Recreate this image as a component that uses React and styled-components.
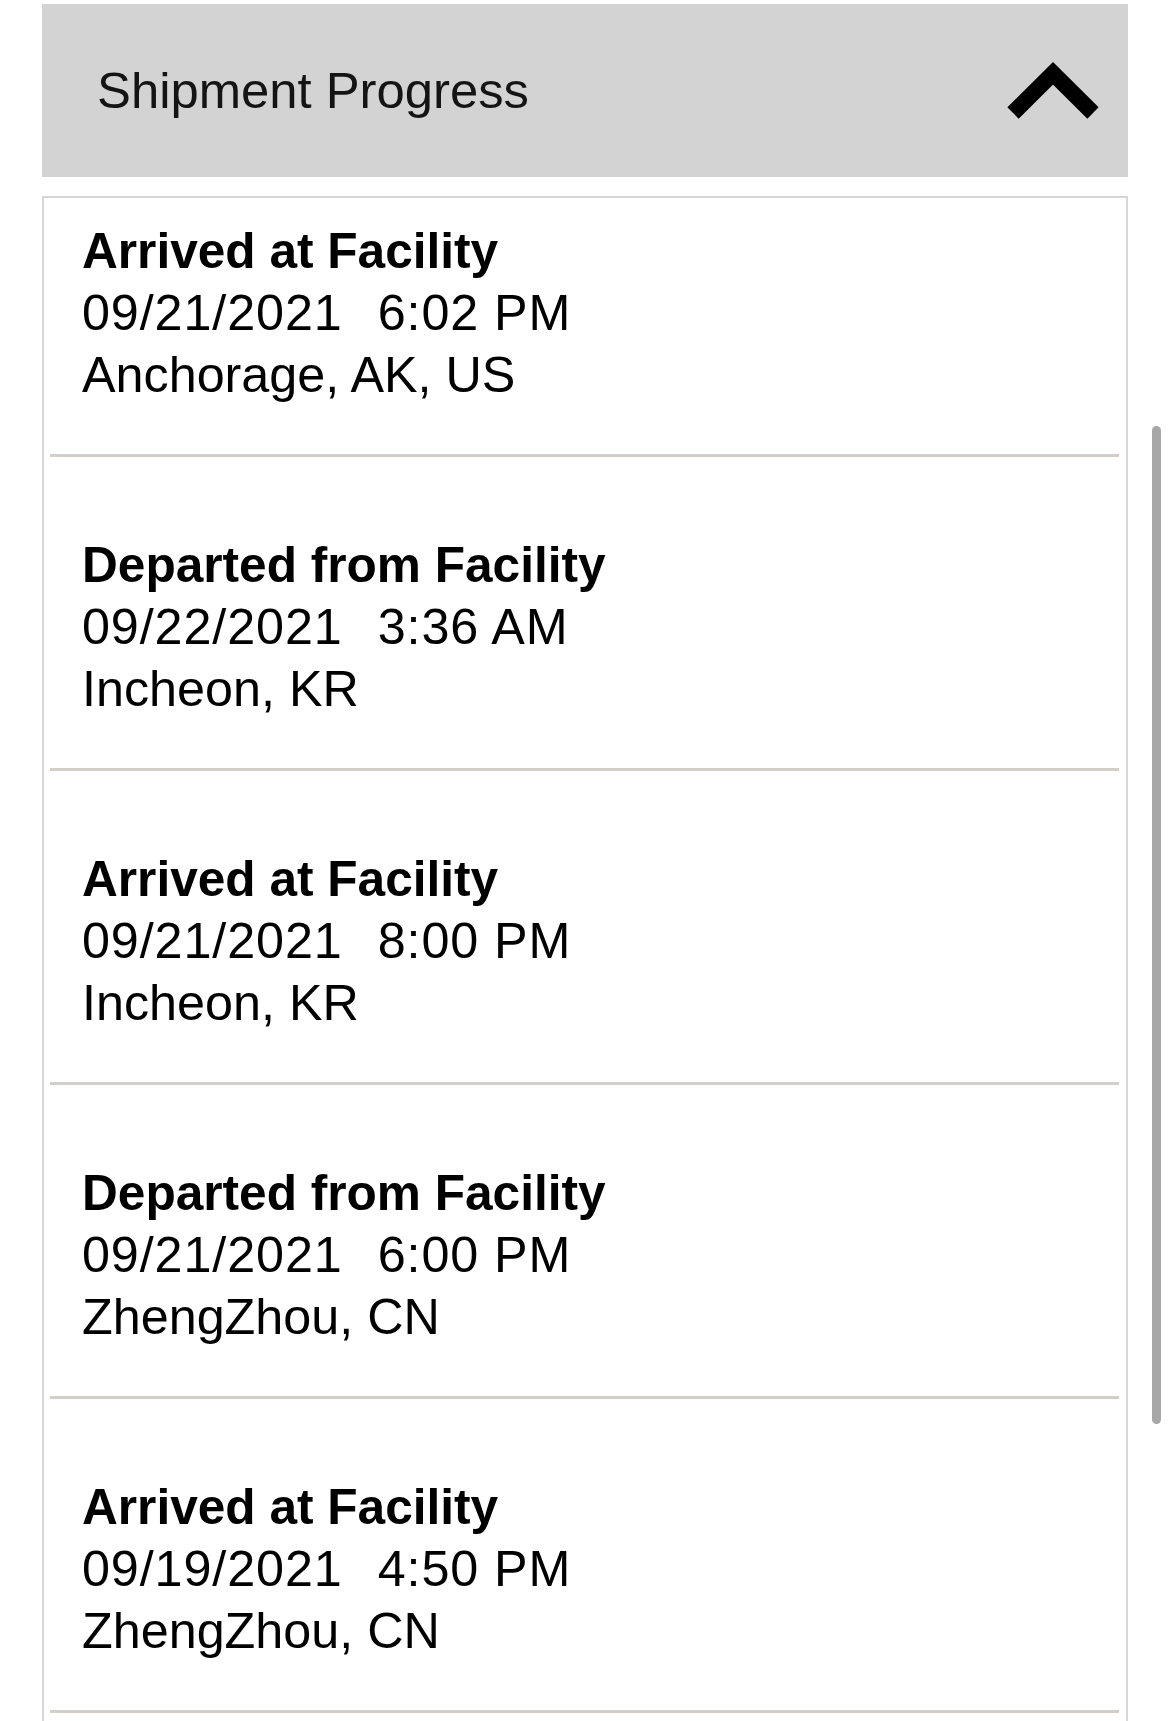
import React from 'react';
import styled, { createGlobalStyle } from 'styled-components';

const GlobalStyle = createGlobalStyle`
  html, body {
    margin: 0;
    padding: 0;
    background: #fff;
  }
  body {
    font-family: 'Liberation Sans', Arial, sans-serif;
    color: #000;
  }
`;

const Page = styled.div`
  display: flex;
  flex-direction: column;
  box-sizing: border-box;
  padding: 4px 42px 0 42px;
  height: 100vh;
  overflow: hidden;
`;

const Header = styled.div`
  display: flex;
  align-items: center;
  justify-content: space-between;
  flex: 0 0 173px;
  background: #d3d3d3;
  padding: 0 30px 0 55px;
`;

const HeaderTitle = styled.h2`
  margin: 0;
  font-size: 50.8px;
  font-weight: 400;
  color: #141414;
`;

const Chevron = styled.svg`
  width: 90px;
  height: 57px;
  overflow: visible;
`;

const Card = styled.div`
  flex: 1;
  margin-top: 19px;
  border: 2px solid #d6d6d6;
  border-bottom: none;
  background: #fff;
`;

const Event = styled.div`
  padding: ${p => (p.$first ? '22px' : '77px')} 38px 48px 32px;
  border-bottom: 3px solid #d3cec8;
  margin: 0 7px 0 6px;
`;

const Status = styled.div`
  font-size: 49.6px;
  font-weight: 700;
  line-height: 62px;
  white-space: nowrap;
`;

const Line = styled.div`
  font-size: 50.3px;
  line-height: 62px;
  white-space: nowrap;
`;

const DateLine = styled(Line)`
  letter-spacing: 0.9px;
`;

const Time = styled.span`
  margin-left: 35px;
`;

const ScrollThumb = styled.div`
  position: fixed;
  left: 1152px;
  top: 426px;
  width: 9px;
  height: 998px;
  border-radius: 5px;
  background: #a7a7a7;
`;

const events = [
  { status: 'Arrived at Facility', date: '09/21/2021', time: '6:02 PM', place: 'Anchorage, AK, US' },
  { status: 'Departed from Facility', date: '09/22/2021', time: '3:36 AM', place: 'Incheon, KR' },
  { status: 'Arrived at Facility', date: '09/21/2021', time: '8:00 PM', place: 'Incheon, KR' },
  { status: 'Departed from Facility', date: '09/21/2021', time: '6:00 PM', place: 'ZhengZhou, CN' },
  { status: 'Arrived at Facility', date: '09/19/2021', time: '4:50 PM', place: 'ZhengZhou, CN' },
];

const App = () => (
  <>
    <GlobalStyle />
    <Page>
      <Header>
        <HeaderTitle>Shipment Progress</HeaderTitle>
        <Chevron viewBox="0 0 90 57">
          <polyline
            points="5,51 45,11.3 85,51"
            fill="none"
            stroke="#000"
            strokeWidth="16"
            strokeLinejoin="miter"
            strokeLinecap="butt"
          />
        </Chevron>
      </Header>
      <Card>
        {events.map((e, i) => (
          <Event key={i} $first={i === 0}>
            <Status>{e.status}</Status>
            <DateLine>
              {e.date}
              <Time>{e.time}</Time>
            </DateLine>
            <Line>{e.place}</Line>
          </Event>
        ))}
      </Card>
    </Page>
    <ScrollThumb />
  </>
);

export default App;
